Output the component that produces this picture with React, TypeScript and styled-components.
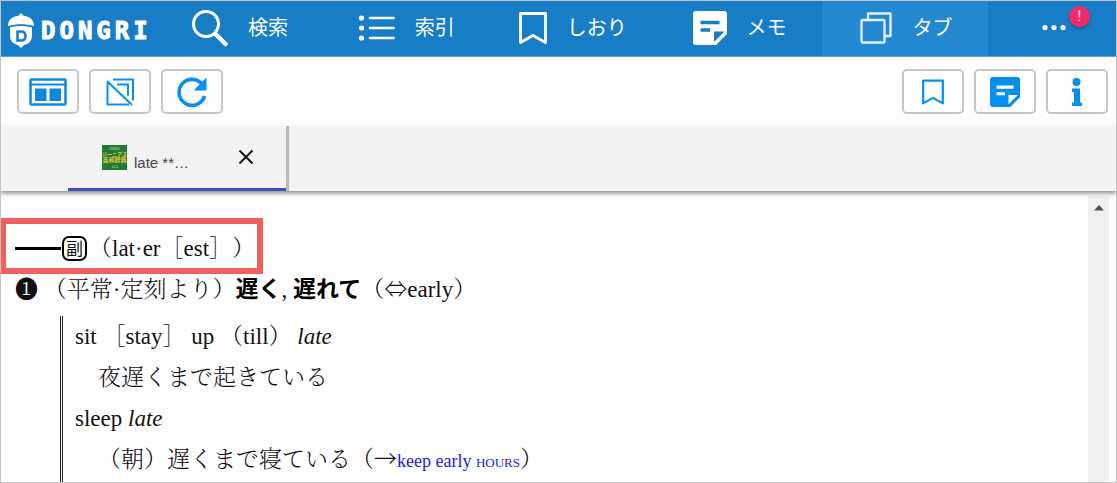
import React from 'react';
import styled, { createGlobalStyle, css } from 'styled-components';

const GlobalStyle = createGlobalStyle`
  *, *::before, *::after { box-sizing: border-box; }
  body { margin: 0; background: #fff; }
  button { font: inherit; cursor: pointer; }
`;

const sans = `"Liberation Sans", "Noto Sans CJK JP", sans-serif`;
const serif = `"Liberation Serif", "Noto Serif CJK JP", "Noto Sans CJK JP", serif`;

const Shell = styled.div`
  display: flex;
  flex-direction: column;
  height: 100vh;
  border: 1px solid #c4c4c4;
  font-family: ${sans};
`;

const Header = styled.header`
  display: flex;
  flex: none;
  height: 56px;
  background: #167dc6;
  border-bottom: 1px solid #59a3d7;
  color: #fff;
`;

const Brand = styled.a`
  display: flex;
  align-items: center;
  flex: 0 0 153px;
  gap: 6px;
  padding: 4px 0 0 6px;
  color: #fff;
  text-decoration: none;
`;

const Wordmark = styled.span`
  font: bold 24px/28px "DejaVu Sans Mono", monospace;
  letter-spacing: 4px;
  -webkit-text-stroke: 1px #fff;
`;

const Nav = styled.nav`
  display: flex;
  flex: 1;
`;

const NavButton = styled.button<{ $active?: boolean }>`
  display: flex;
  flex: 167 1 0;
  align-items: center;
  justify-content: center;
  gap: 20px;
  padding: 0 0 2px 3px;
  border: 0;
  color: #fff;
  background: ${(p) => (p.$active ? '#2188d1' : 'transparent')};
  font: 400 20px/28px "Noto Sans CJK JP", sans-serif;
`;

const NavLabel = styled.span`
  padding-bottom: 2px;
`;

const MoreButton = styled(NavButton)`
  flex: 127 1 0;
`;

const MoreIcon = styled.span`
  position: relative;
  display: flex;
`;

const Badge = styled.span`
  position: absolute;
  left: 27px;
  top: -18px;
  width: 21px;
  height: 21px;
  border-radius: 50%;
  background: #f22b67;
  box-shadow: 0 2px 3px rgba(0, 0, 0, 0.25);
  font: 14px/21px Roboto, sans-serif;
  text-align: center;
`;

const Toolbar = styled.div`
  display: flex;
  flex: none;
  justify-content: space-between;
  padding: 12px 8px 12px 16px;
  background: linear-gradient(#fff 90%, #f8f8f8);
`;

const ToolGroup = styled.div`
  display: flex;
  gap: 10px;
`;

const ToolButton = styled.button`
  display: flex;
  align-items: center;
  justify-content: center;
  width: 62px;
  height: 45px;
  padding: 0;
  border: 2px solid #c6c6c6;
  border-radius: 5px;
  background: #fff;
  color: #0490f0;
`;

const TabBar = styled.div`
  position: relative;
  display: flex;
  flex: none;
  height: 65px;
  padding-left: 67px;
  background: #f3f3f3;
  box-shadow: 0 1px 5px 1px rgba(0, 0, 0, 0.5);
  clip-path: inset(0 0 -8px 0);
`;

const Tab = styled.div`
  display: flex;
  align-items: center;
  width: 218px;
  padding: 0 28px 0 34px;
  border-bottom: 3px solid #434fb8;
  box-shadow: 3px 0 1px 0 #bcbcbc;
  clip-path: inset(0 -4px 0 0);
`;

const TabTitle = styled.span`
  flex: 1;
  padding: 12px 0 0 7px;
  color: #444;
  font-size: 15px;
  line-height: 18px;
`;

const CloseButton = styled.button`
  display: flex;
  padding: 4px;
  border: 0;
  background: none;
  color: #111;
`;

const Body = styled.div`
  display: flex;
  flex: 1;
  min-height: 0;
  padding-right: 7px;
`;

const Article = styled.main`
  flex: 1;
  min-width: 0;
  overflow: hidden;
  padding: 36px 0 0 14px;
  color: #111;
  font: 300 23px/41px ${serif};
  text-spacing-trim: space-all;
  white-space: nowrap;
`;

const Entry = styled.p<{ $indent?: boolean }>`
  height: 41px;
  margin: 0;
  ${(p) => p.$indent && css`padding-left: 23px;`}
`;

const PartOfSpeech = styled.h1`
  position: relative;
  display: flex;
  align-items: center;
  height: 42px;
  margin: 0;
  font: inherit;
`;

const Highlight = styled.span`
  position: absolute;
  left: -15px;
  top: -9px;
  width: 263px;
  height: 56px;
  border: 6px solid #f06060;
`;

const Rule = styled.span`
  width: 46px;
  height: 3px;
  margin-right: 1px;
  background: #000;
`;

const Class = styled.span`
  width: 25px;
  height: 25px;
  margin-right: 2px;
  border: 2px solid #000;
  border-radius: 7px;
  font: 400 17px/20px "Noto Sans CJK JP", sans-serif;
  text-align: center;
`;

const Strong = styled.b`
  color: #000;
  font-family: "Noto Sans CJK JP", sans-serif;
  font-weight: 700;
  line-height: 1;
`;

const Arrow = styled.span`
  font-family: "Noto Sans CJK JP", sans-serif;
  line-height: 1;
`;

const Examples = styled.section`
  margin: 6px 0 0 45px;
  padding: 0 0 12px 12px;
  border-left: 3px double #222;
`;

const CrossLink = styled.a`
  color: #1a1af0;
  font-size: 18px;
  text-decoration: none;
`;

const Caps = styled.span`
  font-size: 13px;
`;

const Scroll = styled.div`
  display: flex;
  justify-content: center;
  width: 21px;
  margin-top: 5px;
  padding-top: 9px;
  background: #f0f0f0;
`;

const Acorn = () => (
  <svg width="28" height="36" viewBox="0 0 28 36" fill="none" aria-hidden="true">
    <path d="M1 13C1 7 5 3.500 11 3L14 0L17 3C23 3.500 27 7 27 13C18 10.500 10 10.500 1 13Z" fill="#fff" />
    <path d="M3 14.500C10 12.500 18 12.500 25 14.500V22C25 28 22 31 17 32L14 35L11 32C6 31 3 28 3 22Z" fill="#fff" />
    <path d="M10.500 18.500H14C17.500 18.500 18.500 20.500 18.500 23S17.500 27.500 14 27.500H10.500Z" stroke="#167dc6" strokeWidth="2.500" />
  </svg>
);

const SearchIcon = () => (
  <svg width="38" height="38" viewBox="0 0 38 38" fill="none" stroke="#fff" aria-hidden="true">
    <circle cx="16" cy="15" r="12.500" strokeWidth="3" />
    <path d="M25.500 25L35.500 35" strokeWidth="4.500" strokeLinecap="round" />
  </svg>
);

const ListIcon = () => (
  <svg width="38" height="28" viewBox="0 0 38 28" fill="#fff" stroke="#fff" strokeWidth="2.500" strokeLinecap="round" aria-hidden="true">
    {[4, 14, 24].map((y) => (
      <g key={y}>
        <circle cx="4.500" cy={y} r="2.600" stroke="none" />
        <path d={`M13 ${y}H36.500`} />
      </g>
    ))}
  </svg>
);

const BookmarkIcon = ({ width, height }: { width: number; height: number }) => (
  <svg width={width} height={height} viewBox="0 0 28 32" fill="none" stroke="currentColor" strokeWidth="2.800" strokeLinejoin="round" aria-hidden="true">
    <path d="M1.500 1.500H26.500V30.500L14 23.500L1.500 30.500Z" />
  </svg>
);

const NoteIcon = ({ size, ink }: { size: number; ink: string }) => (
  <svg width={size} height={size} viewBox="0 0 34 34" aria-hidden="true">
    <path d="M3 0H31Q34 0 34 3V23L23 34H3Q0 34 0 31V3Q0 0 3 0Z" fill="currentColor" />
    <path d="M7.500 11.500H26.500M7.500 19H17" stroke={ink} strokeWidth="3.600" />
    <path d="M21 31V20.500H31.500Z" fill={ink} />
  </svg>
);

const TabsIcon = () => (
  <svg width="32" height="32" viewBox="0 0 32 32" fill="none" stroke="#e4f1fb" strokeWidth="2.300" strokeLinejoin="round" aria-hidden="true">
    <rect x="1.500" y="8" width="23" height="22.500" rx="1" />
    <path d="M8 8V1.500H30.500V24H25" />
  </svg>
);

const ColumnsIcon = () => (
  <svg width="38" height="28" viewBox="0 0 38 28" aria-hidden="true">
    <rect x="1.500" y="1.500" width="35" height="25" rx="1" fill="none" stroke="#0a88de" strokeWidth="2.500" />
    <path d="M1 6.500H37" stroke="#0a88de" strokeWidth="2" />
    <path d="M6 10.500H17.500V23H6ZM20.500 10.500H32V23H20.500Z" fill="#0a88de" />
  </svg>
);

const NoTabsIcon = () => (
  <svg width="28" height="28" viewBox="0 0 28 28" fill="none" stroke="currentColor" strokeWidth="2" aria-hidden="true">
    <path d="M1.500 5V26.500H23M7 1.500H27V22.500M11 6.500H22V17.500M1 3L26 27" />
  </svg>
);

const ReloadIcon = () => (
  <svg width="30" height="30" viewBox="0 0 30 30" aria-hidden="true">
    <path d="M25 7A13 13 0 1 0 27.500 19" fill="none" stroke="currentColor" strokeWidth="3.600" />
    <path d="M29.500 .500V13.500H16.500Z" fill="currentColor" />
  </svg>
);

const InfoIcon = () => (
  <svg width="12" height="28" viewBox="0 0 12 28" fill="currentColor" aria-hidden="true">
    <circle cx="5.500" cy="4" r="4" />
    <path d="M1 10.500H9V24.500H11V28H1V24.500H3V14H1Z" />
  </svg>
);

const Cover = () => (
  <svg width="25" height="25" viewBox="0 0 25 25" textAnchor="middle" fontFamily="Noto Sans CJK JP, sans-serif" fill="#d3c13c" role="img" aria-label="辞典">
    <rect width="25" height="25" fill="#1f7a36" />
    <text x="12.500" y="5" fontSize="3" fill="#cde0c8">GENIUS</text>
    <text x="12.500" y="11" fontSize="5" fontWeight="900">ジーニアス</text>
    <text x="12.500" y="17" fontSize="6" fontWeight="900">英和辞典</text>
    <text x="13" y="23" fontSize="5" fill="#cde0c8" fontFamily="Liberation Serif, serif">G5</text>
  </svg>
);

const navItems = [
  { label: '検索', icon: <SearchIcon /> },
  { label: '索引', icon: <ListIcon /> },
  { label: 'しおり', icon: <BookmarkIcon width={28} height={32} /> },
  { label: 'メモ', icon: <NoteIcon size={34} ink="#167dc6" /> },
  { label: 'タブ', icon: <TabsIcon />, active: true },
];

export default function App() {
  return (
    <Shell>
      <GlobalStyle />
      <Header>
        <Brand href="#">
          <Acorn />
          <Wordmark>DONGRI</Wordmark>
        </Brand>
        <Nav>
          {navItems.map((item) => (
            <NavButton key={item.label} $active={item.active}>
              {item.icon}
              <NavLabel>{item.label}</NavLabel>
            </NavButton>
          ))}
          <MoreButton aria-label="その他">
            <MoreIcon>
              <svg width="24" height="8" viewBox="0 0 24 8" fill="#fff" aria-hidden="true">
                <circle cx="3" cy="3.500" r="2.600" />
                <circle cx="12" cy="3.500" r="2.600" />
                <circle cx="21" cy="3.500" r="2.600" />
              </svg>
              <Badge>!</Badge>
            </MoreIcon>
          </MoreButton>
        </Nav>
      </Header>
      <Toolbar>
        <ToolGroup>
          <ToolButton aria-label="分割表示"><ColumnsIcon /></ToolButton>
          <ToolButton aria-label="タブを閉じる"><NoTabsIcon /></ToolButton>
          <ToolButton aria-label="再読み込み"><ReloadIcon /></ToolButton>
        </ToolGroup>
        <ToolGroup>
          <ToolButton aria-label="しおり"><BookmarkIcon width={22} height={26} /></ToolButton>
          <ToolButton aria-label="メモ"><NoteIcon size={30} ink="#fff" /></ToolButton>
          <ToolButton aria-label="情報"><InfoIcon /></ToolButton>
        </ToolGroup>
      </Toolbar>
      <TabBar>
        <Tab>
          <Cover />
          <TabTitle>late **…</TabTitle>
          <CloseButton aria-label="閉じる">
            <svg width="16" height="16" viewBox="0 0 16 16" stroke="currentColor" strokeWidth="2" aria-hidden="true">
              <path d="M1.500 1.500L14.500 14.500M14.500 1.500L1.500 14.500" />
            </svg>
          </CloseButton>
        </Tab>
      </TabBar>
      <Body>
        <Article>
          <PartOfSpeech>
            <Rule />
            <Class>副</Class>
            （lat·er［est］）
            <Highlight />
          </PartOfSpeech>
          <Entry>
            ❶ （平常·定刻より）<Strong>遅く</Strong>, <Strong>遅れて</Strong>（<Arrow>⇔</Arrow>early）
          </Entry>
          <Examples>
            <Entry>sit ［stay］ up （till） <i>late</i></Entry>
            <Entry $indent>夜遅くまで起きている</Entry>
            <Entry>sleep <i>late</i></Entry>
            <Entry $indent>
              （朝）遅くまで寝ている（<Arrow>→</Arrow><CrossLink href="#">keep early <Caps>HOURS</Caps></CrossLink>）
            </Entry>
          </Examples>
        </Article>
        <Scroll>
          <svg width="10" height="6" viewBox="0 0 10 6" fill="#505050" aria-hidden="true">
            <path d="M0 5.500L5 0L10 5.500Z" />
          </svg>
        </Scroll>
      </Body>
    </Shell>
  );
}
